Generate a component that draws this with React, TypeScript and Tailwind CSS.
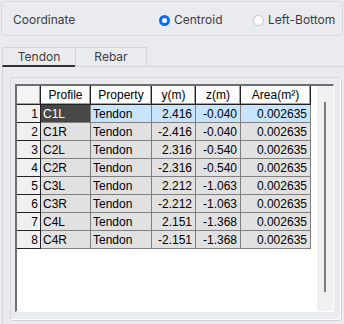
import React from "react";

const rows = [
  ["C1L", "Tendon", "2.416", "-0.040", "0.002635"],
  ["C1R", "Tendon", "-2.416", "-0.040", "0.002635"],
  ["C2L", "Tendon", "2.316", "-0.540", "0.002635"],
  ["C2R", "Tendon", "-2.316", "-0.540", "0.002635"],
  ["C3L", "Tendon", "2.212", "-1.063", "0.002635"],
  ["C3R", "Tendon", "-2.212", "-1.063", "0.002635"],
  ["C4L", "Tendon", "2.151", "-1.368", "0.002635"],
  ["C4R", "Tendon", "-2.151", "-1.368", "0.002635"],
];

const widths = ["w-[50px]", "w-[61px]", "w-[44px]", "w-[45px]", "w-[70px]"];
const heads = ["Profile", "Property", "y(m)", "z(m)", "Area(m²)"];

function Radio({ checked, label }: { checked: boolean; label: string }) {
  return (
    <div className="flex items-center gap-[4px] whitespace-nowrap">
      <span
        className={`w-[11px] h-[11px] rounded-full bg-white shrink-0 ${
          checked ? "border-[3px] border-[#0b6cf2]" : "border border-[#c4c5c9]"
        }`}
      />
      <span>{label}</span>
    </div>
  );
}

export default function App() {
  return (
    <div className="w-[344px] h-[324px] bg-[#eaebee] overflow-hidden flex flex-col text-[12px] text-[#3b3c40] font-['Inter','Noto_Sans',sans-serif]">
      <div className="mx-[1px] mt-[1px] h-[35px] shrink-0 rounded-[4px] border border-[#d8d9dd] flex items-center pl-[11px] pt-[3px]">
        <span className="w-[146px]">Coordinate</span>
        <div className="w-[94px]">
          <Radio checked label="Centroid" />
        </div>
        <Radio checked={false} label="Left-Bottom" />
      </div>

      <div className="mt-[11px] h-[20px] shrink-0 flex pl-[2px]">
        <div className="w-[73px] h-full flex items-center justify-center border-t border-l border-[#d4d5d9] border-b-2 border-b-[#333333] pt-[1px]">
          Tendon
        </div>
        <div className="w-[72px] h-full flex items-center justify-center border border-[#d4d5d9] border-b-[#d4d5d9] pb-[1px]">
          Rebar
        </div>
        <div className="flex-1 border-b border-[#d4d5d9]" />
      </div>

      <div className="flex-1 ml-[2px] border-l border-[#d4d5d9] pl-[7px] pt-[10px] pr-[3px]">
        <div className="h-[243px] rounded-[3px] border border-[#d8d9dd] border-r-white border-b-white shadow-[1px_1px_0_#cfd0d4] pl-[4px] pt-[6px]">
          <div className="w-[319px] h-[228px] border-t-2 border-l-2 border-[#6e6e6e] border-r border-b border-r-white border-b-white bg-white flex font-['Liberation_Sans',Arial,sans-serif] text-[12px] text-black">
            <div className="w-[294px] flex flex-col">
              <div className="flex h-[19px]">
                <div className="w-[24px] bg-[#f4f4f4] border-r border-b border-[#222] shadow-[inset_-1px_-1px_0_#a0a0a0]" />
                {heads.map((h, i) => (
                  <div
                    key={h}
                    className={`${widths[i]} bg-[#fbfbfb] border-r border-b border-[#222] shadow-[inset_-1px_-1px_0_#a0a0a0] flex items-center justify-center`}
                  >
                    {h}
                  </div>
                ))}
              </div>
              {rows.map((r, ri) => {
                const sel = ri === 0;
                return (
                  <div key={ri} className="flex h-[18px]">
                    <div className="w-[24px] bg-[#f0f0f0] border-r border-b border-[#222] flex items-center justify-end pr-[2px]">
                      {ri + 1}
                    </div>
                    {r.map((c, ci) => (
                      <div
                        key={ci}
                        className={`${widths[ci]} border-r border-b border-[#7f7f7f] flex items-center ${
                          ci < 2 ? "justify-start pl-[2px]" : "justify-end pr-[3px]"
                        } ${
                          sel
                            ? ci === 0
                              ? "bg-[#474747] text-white"
                              : "bg-[#c7e4fc]"
                            : "bg-[#e1e1e1]"
                        }`}
                      >
                        {c}
                      </div>
                    ))}
                  </div>
                );
              })}
            </div>
            <div className="w-[6px]" />
            <div className="w-[16px] h-full bg-[#f0f0f0] flex justify-center pt-[16px]">
              <div className="w-[2px] h-[190px] bg-[#7c7c7c]" />
            </div>
          </div>
        </div>
      </div>
    </div>
  );
}
